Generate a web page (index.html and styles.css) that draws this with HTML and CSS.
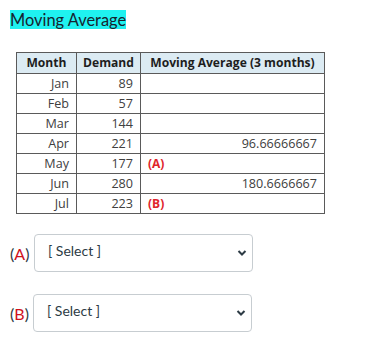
FILE: index.html
```html
<!DOCTYPE html>
<html>
<head>
<meta charset="utf-8">
<link rel="stylesheet" href="styles.css">
</head>
<body>
<div class="page">
  <h2 class="title"><span class="hl">Moving Average</span></h2>
  <table class="data">
    <thead>
      <tr><th class="c1">Month</th><th class="c2">Demand</th><th class="c3">Moving Average (3 months)</th></tr>
    </thead>
    <tbody>
      <tr><td>Jan</td><td>89</td><td></td></tr>
      <tr><td>Feb</td><td>57</td><td></td></tr>
      <tr><td>Mar</td><td>144</td><td></td></tr>
      <tr><td>Apr</td><td>221</td><td>96.66666667</td></tr>
      <tr><td>May</td><td>177</td><td class="mark">(A)</td></tr>
      <tr><td>Jun</td><td>280</td><td>180.6666667</td></tr>
      <tr><td>Jul</td><td>223</td><td class="mark">(B)</td></tr>
    </tbody>
  </table>
  <div class="answers">
    <div class="row">
      <span class="lbl">(<span class="red">A</span>)</span>
      <div class="sel">
        <select><option>[ Select ]</option></select>
        <svg class="chev" width="10" height="8" viewBox="0 0 10 8"><path d="M1.5 2 L5 5.5 L8.5 2" fill="none" stroke="#2d3b45" stroke-width="2"/></svg>
      </div>
    </div>
    <div class="row rowb">
      <span class="lbl">(<span class="red">B</span>)</span>
      <div class="sel">
        <select><option>[ Select ]</option></select>
        <svg class="chev" width="10" height="8" viewBox="0 0 10 8"><path d="M1.5 2 L5 5.5 L8.5 2" fill="none" stroke="#2d3b45" stroke-width="2"/></svg>
      </div>
    </div>
  </div>
</div>
</body>
</html>
```
FILE: styles.css
```css
html, body {
  margin: 0;
  padding: 0;
  background: #fff;
}
.page {
  padding: 10px 0 0 10px;
  font-family: Lato, "Open Sans", sans-serif;
  color: #2d3b45;
}
.title {
  margin: 0;
  font-size: 16.4px;
  font-weight: 400;
  line-height: 20px;
}
.hl {
  background: #1ff2f0;
  color: #16232e;
}
.data {
  margin: 22px 0 0 6px;
  border-collapse: collapse;
  table-layout: fixed;
  width: 309px;
  font-family: "Open Sans", "Liberation Sans", sans-serif;
  font-size: 12.6px;
  color: #404040;
}
.data th, .data td {
  border: 1px solid #5a5a5a;
  height: 19px;
  padding: 0 7px;
  text-align: right;
  line-height: 18px;
  white-space: nowrap;
  overflow: visible;
}
.data th {
  background: #dcebf3;
  font-weight: 700;
  font-size: 12.1px;
  color: #1e1e1e;
  height: 20px;
  text-align: center;
  padding: 0 4px;
}
.c1 { width: 51px; }
.c2 { width: 55px; }
.data td.mark {
  text-align: left;
  color: #e0242c;
  font-weight: 700;
  font-size: 12px;
}
.answers {
  margin-top: 20px;
}
.row {
  display: flex;
  align-items: center;
}
.rowb {
  margin-top: 22px;
}
.rowb .sel { margin-left: -1px; }
.lbl {
  font-size: 16px;
  width: 24px;
  color: #2d3b45;
}
.red { color: #d0111b; }
.sel {
  position: relative;
  width: 219px;
  height: 38px;
}
.sel select {
  -webkit-appearance: none;
  appearance: none;
  width: 100%;
  height: 100%;
  box-sizing: border-box;
  border: 1px solid #c7cdd1;
  border-radius: 4px;
  background: #fff;
  font-family: Lato, sans-serif;
  font-size: 14px;
  color: #2d3b45;
  padding: 0 0 5px 13px;
  margin: 0;
}
.chev {
  position: absolute;
  right: 6px;
  top: 15px;
  pointer-events: none;
}
```
